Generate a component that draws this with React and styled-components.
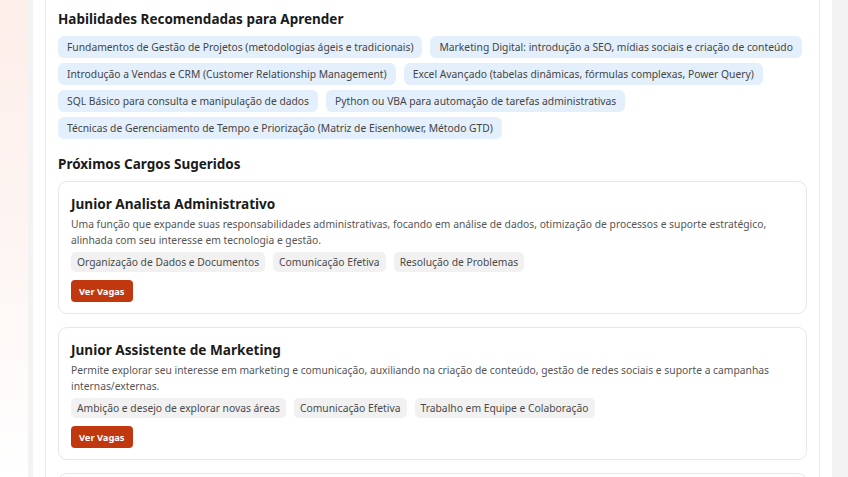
import React from "react";
import styled, { createGlobalStyle } from "styled-components";

const GlobalStyle = createGlobalStyle`
  html, body {
    margin: 0;
    padding: 0;
    height: 100%;
    overflow: hidden;
  }
  body {
    font-family: "Noto Sans", "Open Sans", Arial, sans-serif;
    background: #fff;
  }
`;

const skills = [
  "Fundamentos de Gestão de Projetos (metodologias ágeis e tradicionais)",
  "Marketing Digital: introdução a SEO, mídias sociais e criação de conteúdo",
  "Introdução a Vendas e CRM (Customer Relationship Management)",
  "Excel Avançado (tabelas dinâmicas, fórmulas complexas, Power Query)",
  "SQL Básico para consulta e manipulação de dados",
  "Python ou VBA para automação de tarefas administrativas",
  "Técnicas de Gerenciamento de Tempo e Priorização (Matriz de Eisenhower, Método GTD)",
];

const roles = [
  {
    title: "Junior Analista Administrativo",
    desc: "Uma função que expande suas responsabilidades administrativas, focando em análise de dados, otimização de processos e suporte estratégico, alinhada com seu interesse em tecnologia e gestão.",
    tags: [
      "Organização de Dados e Documentos",
      "Comunicação Efetiva",
      "Resolução de Problemas",
    ],
  },
  {
    title: "Junior Assistente de Marketing",
    desc: "Permite explorar seu interesse em marketing e comunicação, auxiliando na criação de conteúdo, gestão de redes sociais e suporte a campanhas internas/externas.",
    tags: [
      "Ambição e desejo de explorar novas áreas",
      "Comunicação Efetiva",
      "Trabalho em Equipe e Colaboração",
    ],
  },
];

export default function App() {
  return (
    <>
      <GlobalStyle />
      <Page>
        <Gutter />
        <Shell>
          <Sheet>
            <Panel>
              <SectionTitle>Habilidades Recomendadas para Aprender</SectionTitle>
              <ChipList>
                {skills.map((s) => (
                  <SkillChip key={s}>{s}</SkillChip>
                ))}
              </ChipList>

              <SectionTitle $spaced>Próximos Cargos Sugeridos</SectionTitle>
              <RoleList>
                {roles.map((r) => (
                  <RoleCard key={r.title}>
                    <RoleTitle>{r.title}</RoleTitle>
                    <RoleDesc>{r.desc}</RoleDesc>
                    <TagList>
                      {r.tags.map((t) => (
                        <Tag key={t}>{t}</Tag>
                      ))}
                    </TagList>
                    <JobsButton>Ver Vagas</JobsButton>
                  </RoleCard>
                ))}
                {/* next card, only its top edge is in view */}
                <RoleCard />
              </RoleList>
            </Panel>
          </Sheet>
        </Shell>
      </Page>
    </>
  );
}

// Styled components
const Page = styled.div`
  display: flex;
  height: 477px;
  overflow: hidden;
`;

const Gutter = styled.div`
  width: 28px;
  flex: none;
  background: linear-gradient(180deg, #fdefea 0%, #fdf4f1 45%, #ffffff 100%);
`;

const Shell = styled.div`
  flex: 1;
  display: flex;
  background: #f3f3f4;
  padding: 0 16px 0 5px;
`;

const Sheet = styled.div`
  flex: 1;
  background: #fff;
  padding: 0 12px;
  display: flex;
`;

const Panel = styled.div`
  flex: 1;
  border-left: 1px solid #ececec;
  border-right: 1px solid #ececec;
  padding: 9px 12px 0 12px;
`;

const SectionTitle = styled.h2`
  margin: ${(p) => (p.$spaced ? "15px" : "0")} 0 7px 0;
  font-size: 13.5px;
  font-weight: 700;
  color: #1b1b1b;
  line-height: 20px;
`;

const ChipList = styled.div`
  display: flex;
  flex-wrap: wrap;
  gap: 5px 8px;
`;

const SkillChip = styled.span`
  background: #e3effb;
  color: #454545;
  font-size: 10.3px;
  line-height: 22px;
  padding: 0 9px;
  border-radius: 6px;
`;

const RoleList = styled.div`
  display: flex;
  flex-direction: column;
  gap: 13px;
`;

const RoleCard = styled.div`
  border: 1px solid #e7e7e7;
  border-radius: 9px;
  padding: 12px 12px 11px 12px;
  min-height: 40px;
  background: #fff;
`;

const RoleTitle = styled.h3`
  margin: 0 0 2px 0;
  font-size: 13.6px;
  font-weight: 700;
  color: #1b1b1b;
  line-height: 20px;
`;

const RoleDesc = styled.p`
  margin: 0 0 4px 0;
  font-size: 10.3px;
  line-height: 16px;
  color: #555;
`;

const TagList = styled.div`
  display: flex;
  flex-wrap: wrap;
  gap: 6px 8px;
  margin-bottom: 8px;
`;

const Tag = styled.span`
  background: #f1f1f1;
  color: #4a4a4a;
  font-size: 10.3px;
  line-height: 20px;
  padding: 0 6px;
  border-radius: 5px;
`;

const JobsButton = styled.button`
  display: block;
  font-family: inherit;
  background: #c1380f;
  color: #fff;
  border: none;
  border-radius: 4px;
  font-size: 9.3px;
  font-weight: 700;
  height: 22px;
  padding: 0 8px;
  cursor: pointer;
`;
